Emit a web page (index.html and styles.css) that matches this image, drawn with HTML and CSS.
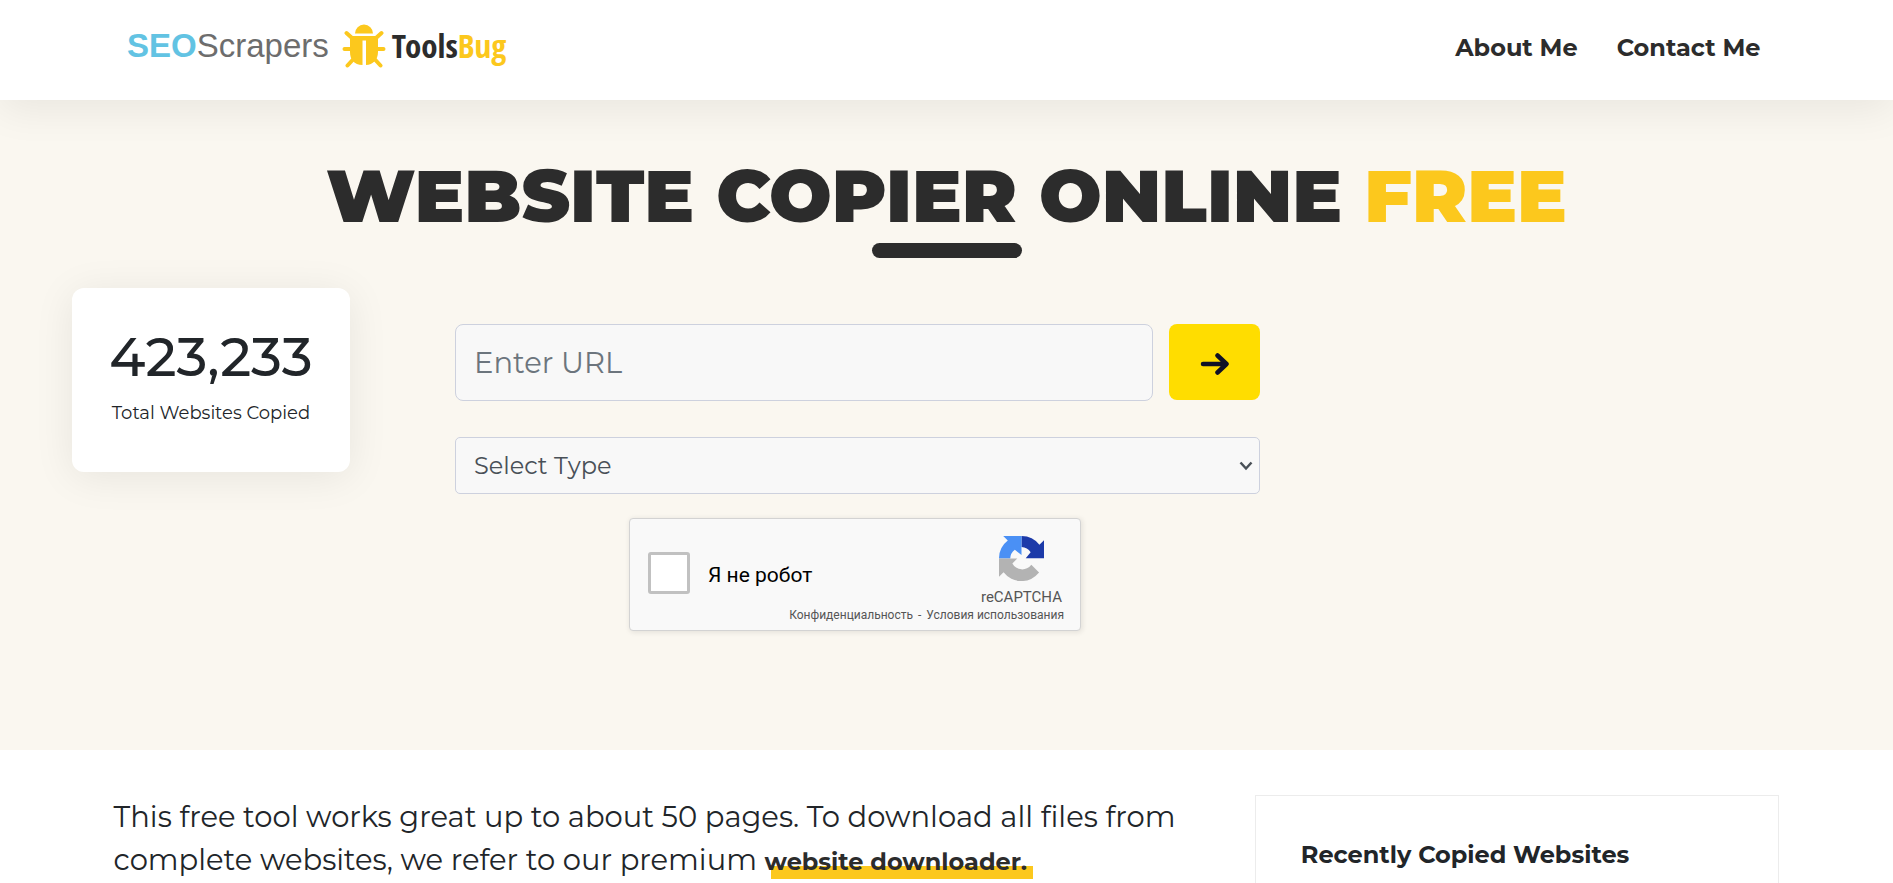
FILE: index.html
```html
<!DOCTYPE html>
<html lang="en">
<head>
<meta charset="utf-8">
<meta name="viewport" content="width=device-width, initial-scale=1">
<title>Website Copier Online Free</title>
<link rel="stylesheet" href="styles.css">
</head>
<body>
<header class="site-header">
  <div class="brands">
    <a class="brand brand-seo" href="#"><b>SEO</b>Scrapers</a>
    <a class="brand brand-bug" href="#">
      <svg class="bug-icon" viewBox="0 0 44 44" aria-hidden="true">
        <path class="bug-fill" d="M13 9.500a9 9 0 0 1 18 0zM8 12h28v16c0 8-5 12.500-12 13V16.500h-3.500v24.500C12 40.500 8 36 8 28z"/>
        <path class="bug-legs" d="M10 14 4.500 9M34 14l5.500-5M9 25H2.500M35 25h6.500M11 35.500l-5.500 6M33 35.500l5.500 6"/>
      </svg>
      <span class="bug-name">Tools<span class="accent">Bug</span></span>
    </a>
  </div>
  <nav class="main-nav">
    <a href="#">About Me</a>
    <a href="#">Contact Me</a>
  </nav>
</header>
<section class="hero">
  <h1 class="title">WEBSITE COPIER ONLINE <span class="accent">FREE</span></h1>
  <div class="title-bar"></div>
  <div class="hero-row">
    <div class="counter">
      <strong class="counter-number">423,233</strong>
      <span class="counter-label">Total Websites Copied</span>
    </div>
    <form class="copy-form">
      <div class="url-row">
        <input class="field url-field" type="text" placeholder="Enter URL" aria-label="Enter URL">
        <button class="go" type="button" aria-label="Copy website">
          <svg class="go-icon" viewBox="0 0 30 24" aria-hidden="true"><path d="M4 12h23M18.500 3.500 27.500 12 18.500 20.500"/></svg>
        </button>
      </div>
      <div class="select-wrap">
        <select class="field type-field" aria-label="Select Type"><option>Select Type</option></select>
        <svg class="chevron" viewBox="0 0 14 10" aria-hidden="true"><path d="M1.500 1.500 7 7.500l5.500-6"/></svg>
      </div>
      <div class="captcha">
        <label class="captcha-label"><input class="captcha-box" type="checkbox"><span class="captcha-text">Я не робот</span></label>
        <div class="captcha-brand">
          <svg class="captcha-icon" viewBox="0 0 64 64" aria-hidden="true">
            <path fill="#1c3aa9" d="M64 31.500V6l-6.500 6.500A32 32 0 0 0 32 0v15.500a16 16 0 0 1 13 7.500l-7 8.500z"/>
            <path fill="#4a90f5" d="M32 0H6l6.500 6.500A32 32 0 0 0 0 32h16a16 16 0 0 1 6.500-12.500L32 27z"/>
            <path fill="#b3b3b3" d="M0 32v26l6.500-6.500A32 32 0 0 0 57 52L46 41a16 16 0 0 1-27-2l7-7z"/>
          </svg>
          <span class="captcha-name">reCAPTCHA</span>
        </div>
        <div class="captcha-links"><a href="#">Конфиденциальность</a><span>-</span><a href="#">Условия использования</a></div>
      </div>
    </form>
  </div>
</section>
<main class="content">
  <p class="intro">This free tool works great up to about 50 pages. To download all files from complete websites, we refer to our premium <a class="marked" href="#">website downloader.</a></p>
  <aside class="recent">
    <h2 class="recent-title">Recently Copied Websites</h2>
  </aside>
</main>
</body>
</html>
```
FILE: styles.css
```css
* { box-sizing: border-box; }
html { overflow: hidden; }
body {
  margin: 0;
  color: #212529;
  background: #fff;
  font-family: Montserrat, Inter, sans-serif;
}
a { color: inherit; text-decoration: none; }
.accent { color: #fcc81d; }

.site-header {
  position: relative;
  display: flex;
  justify-content: space-between;
  height: 100px;
  padding: 22px 7% 0 127px;
  background: #fff;
  box-shadow: 0 10px 40px rgba(0, 0, 0, 0.07);
}
.brands { display: flex; gap: 13px; height: 48px; align-items: center; }
.brand-seo {
  color: #6d6d6d;
  font: 33px/48px "Liberation Sans", sans-serif;
}
.brand-seo b { color: #62c3e3; }
.brand-bug { display: flex; align-items: center; gap: 6px; }
.bug-icon { width: 44px; height: 44px; }
.bug-fill { fill: #fcc81d; }
.bug-legs { fill: none; stroke: #fcc81d; stroke-width: 4; stroke-linecap: round; }
.bug-name {
  color: #2c2c2c;
  font: bold 33px/48px "Liberation Sans Narrow", "Open Sans Condensed", "Roboto Condensed", "Liberation Sans", sans-serif;
}
.main-nav { display: flex; gap: 39px; height: 50px; align-items: center; }
.main-nav a { color: #2c2c2c; font-size: 24px; font-weight: 700; }

.hero { padding: 60px 72px 119px; background: #faf7f0; }
.title {
  margin: 0;
  color: #2c2c2c;
  font-size: 74px;
  line-height: 71px;
  font-weight: 900;
  text-align: center;
  white-space: nowrap;
}
.title-bar {
  width: 150px;
  height: 15px;
  margin: 12px auto 30px;
  border-radius: 8px;
  background: #2c2c2c;
}
.hero-row { display: flex; align-items: flex-start; gap: 105px; }
.counter {
  display: flex;
  flex: 0 0 278px;
  flex-direction: column;
  align-items: center;
  height: 184px;
  padding-top: 39px;
  border-radius: 12px;
  background: #fff;
  box-shadow: 0 5px 40px rgba(0, 0, 0, 0.08);
}
.counter-number { font-size: 54px; line-height: 60px; font-weight: 500; }
.counter-label { margin-top: 14px; font-size: 18px; line-height: 24px; }

.copy-form { flex: 0 0 46%; padding-top: 36px; }
.url-row { display: flex; gap: 16px; }
.field {
  border: 1px solid #cdd1de;
  color: #495057;
  background: #f8f8f8;
  font-family: inherit;
}
.url-field {
  flex: 1;
  min-width: 0;
  height: 77px;
  padding: 0 18px;
  border-radius: 8px;
  font-size: 29px;
}
.url-field::placeholder { color: #6c757d; opacity: 1; }
.go {
  display: grid;
  place-items: center;
  width: 91px;
  height: 76px;
  padding: 4px 0 0;
  border: 0;
  border-radius: 8px;
  background: #ffdd00;
}
.go-icon { width: 30px; height: 24px; }
.go-icon path { fill: none; stroke: #0f1026; stroke-width: 4.500; stroke-linecap: round; stroke-linejoin: round; }
.select-wrap { position: relative; margin-top: 36px; }
.type-field {
  display: block;
  width: 100%;
  height: 57px;
  padding: 0 18px;
  border-radius: 5px;
  font-size: 24px;
  appearance: none;
}
.chevron { position: absolute; top: 24px; right: 7px; width: 14px; height: 10px; pointer-events: none; }
.chevron path { fill: none; stroke: #495057; stroke-width: 2.500; }

.captcha {
  display: grid;
  grid-template-columns: 1fr auto;
  grid-template-rows: 72px auto;
  align-content: start;
  width: 452px;
  height: 113px;
  margin: 24px 0 0 174px;
  padding: 17px 16px 0 18px;
  border: 1px solid #d3d3d3;
  border-radius: 4px;
  background: #f9f9f9;
  box-shadow: 1px 1px 5px 1px rgba(0, 0, 0, 0.08);
  font-family: Roboto, sans-serif;
}
.captcha-label {
  display: flex;
  align-items: center;
  gap: 18px;
  height: 74px;
  color: #000;
  font-size: 21px;
}
.captcha-text { padding-top: 3px; }
.captcha-box {
  width: 42px;
  height: 42px;
  margin: 0;
  border: 3px solid #c1c1c1;
  border-radius: 3px;
  background: #fff;
  appearance: none;
}
.captcha-brand {
  display: flex;
  flex-direction: column;
  align-items: center;
  padding-right: 2px;
  color: #555;
}
.captcha-icon { width: 45px; height: 45px; }
.captcha-name { margin-top: 7px; font-size: 15px; line-height: 18px; }
.captcha-links {
  display: flex;
  grid-column: 1 / -1;
  justify-content: flex-end;
  gap: 5px;
  color: #555;
  font-size: 12px;
  line-height: 14px;
}

.content {
  display: grid;
  grid-template-columns: 1082fr 525fr;
  gap: 60px;
  padding: 45px 6% 0;
}
.intro { margin: 0; font-size: 29px; line-height: 43px; }
.marked {
  display: inline-block;
  padding-right: 6px;
  color: #2c2c2c;
  background: linear-gradient(#fcc81d, #fcc81d) 6px 100% / 100% 13px no-repeat;
  font-size: 24px;
  line-height: 34px;
  font-weight: 700;
}
.recent { padding: 44px 45px; border: 1px solid #ececec; }
.recent-title { margin: 0; font-size: 24px; line-height: 30px; font-weight: 700; }
```
